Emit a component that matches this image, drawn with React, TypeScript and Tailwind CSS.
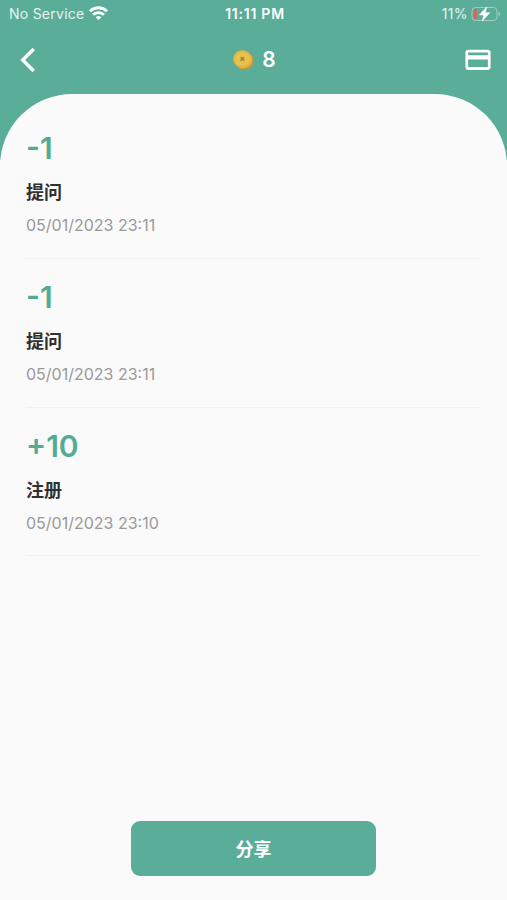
const records = [
  { amount: "-1", title: "提问", date: "05/01/2023 23:11" },
  { amount: "-1", title: "提问", date: "05/01/2023 23:11" },
  { amount: "+10", title: "注册", date: "05/01/2023 23:10" },
];

export default function App() {
  return (
    <div className="flex h-[900px] w-full flex-col overflow-hidden bg-[#fafafa] font-['Inter','Noto_Sans_CJK_SC',sans-serif]">
      <header className="h-[160px] shrink-0 bg-[#5aad99] text-white">
        <StatusBar />
        <div className="grid h-[66px] grid-cols-3 items-center pr-[15px] pl-[20px]">
          <BackIcon className="h-[26px] w-4" />
          <div className="flex items-center justify-center gap-[8px] pr-[4px]">
            <CoinIcon className="h-[22px] w-[22px]" />
            <span className="text-[21px] leading-6 font-semibold">8</span>
          </div>
          <CardIcon className="h-[22px] w-[28px] justify-self-end" />
        </div>
      </header>

      <main className="-mt-[66px] flex flex-1 flex-col rounded-t-[72px] bg-[#fafafa] pt-[16px]">
        <ul className="pr-[26px] pl-[26px]">
          {records.map((record, index) => (
            <li key={index} className="h-[149px] border-b border-[#f1f1f1] pt-[20px] last:h-[148px]">
              <p className="text-[30px] leading-[36px] font-semibold text-[#54ab92]">{record.amount}</p>
              <p className="mt-[14px] text-[18px] leading-[26px] font-bold text-[#303030]">{record.title}</p>
              <p className="mt-[9px] text-[16px] leading-[20px] text-[#999999]">{record.date}</p>
            </li>
          ))}
        </ul>
        <button className="mx-auto mt-auto mb-[24px] h-[55px] w-[245px] rounded-[9px] bg-[#5aad99] pt-[2px] text-[18px] font-bold text-white">
          分享
        </button>
      </main>
    </div>
  );
}

function StatusBar() {
  return (
    <div className="grid h-[27px] grid-cols-3 items-center pr-[6px] pl-[9px] text-[14px] leading-[17px]">
      <div className="flex items-center gap-[5px]">
        <span className="tracking-[0.25px] text-white/85">No Service</span>
        <WifiIcon className="-mt-[2px] h-[14px] w-[19px]" />
      </div>
      <span className="text-center font-semibold tracking-[0.75px]">11:11 PM</span>
      <div className="flex items-center justify-end gap-[3px]">
        <span className="tracking-[0.4px] text-white/85">11%</span>
        <BatteryIcon className="h-[16px] w-[30px]" />
      </div>
    </div>
  );
}

function WifiIcon(props: any) {
  return (
    <svg {...props} viewBox="0 0 19 14" fill="none" stroke="currentColor" strokeWidth="2.8">
      <path d="M1 5.2a12.2 12.2 0 0 1 17 0" />
      <path d="M4 8.8a7.8 7.8 0 0 1 11 0" />
      <path d="M9.5 14 6.6 11.4a4.1 4.1 0 0 1 5.8 0Z" fill="currentColor" stroke="none" />
    </svg>
  );
}

function BatteryIcon(props: any) {
  return (
    <svg {...props} viewBox="0 0 30 16" fill="none">
      <rect x="1" y="1.5" width="25" height="13" rx="3.5" stroke="#fff" strokeOpacity=".4" />
      <path d="M27.5 5.5c2 .8 2 4.2 0 5Z" fill="#fff" fillOpacity=".4" />
      <rect x="2.7" y="3.3" width="3.2" height="9.4" rx="1.2" fill="#dc6558" />
      <path d="M15.7 1 8.4 8.9h4.4L11.3 15l7.5-8.2h-4.5Z" fill="#fff" stroke="#fff" strokeWidth=".6" />
    </svg>
  );
}

function BackIcon(props: any) {
  return (
    <svg {...props} viewBox="0 0 16 26" fill="none" stroke="currentColor" strokeWidth="3.4">
      <path d="M13.7 2 2.7 13l11 11" />
    </svg>
  );
}

function CoinIcon(props: any) {
  return (
    <svg {...props} viewBox="0 0 22 22">
      <ellipse cx="11.7" cy="11.2" rx="10.1" ry="9.3" fill="#c39a35" transform="rotate(25 11.7 11.2)" />
      <ellipse cx="10.7" cy="10.2" rx="9.6" ry="8.9" fill="#e2b844" transform="rotate(25 10.7 10.2)" />
      <ellipse cx="10.4" cy="10" rx="7.3" ry="6.7" fill="#e9c24e" />
      <path d="m8.4 8.2 4 3.6m0-3.6-4 3.6" stroke="#b99342" strokeWidth="1.8" />
      <circle cx="10.4" cy="10" r="1.5" fill="#a28239" />
    </svg>
  );
}

function CardIcon(props: any) {
  return (
    <svg {...props} viewBox="0 0 28 22">
      <path
        d="M4.4.7h19.2a3 3 0 0 1 3 3v14.2a3 3 0 0 1-3 3H4.4a3 3 0 0 1-3-3V3.7a3 3 0 0 1 3-3Zm-.3 2.8v2.7h19.8V3.5Zm0 7.1v7.5h19.8v-7.5Z"
        fill="currentColor"
        fillRule="evenodd"
      />
    </svg>
  );
}
